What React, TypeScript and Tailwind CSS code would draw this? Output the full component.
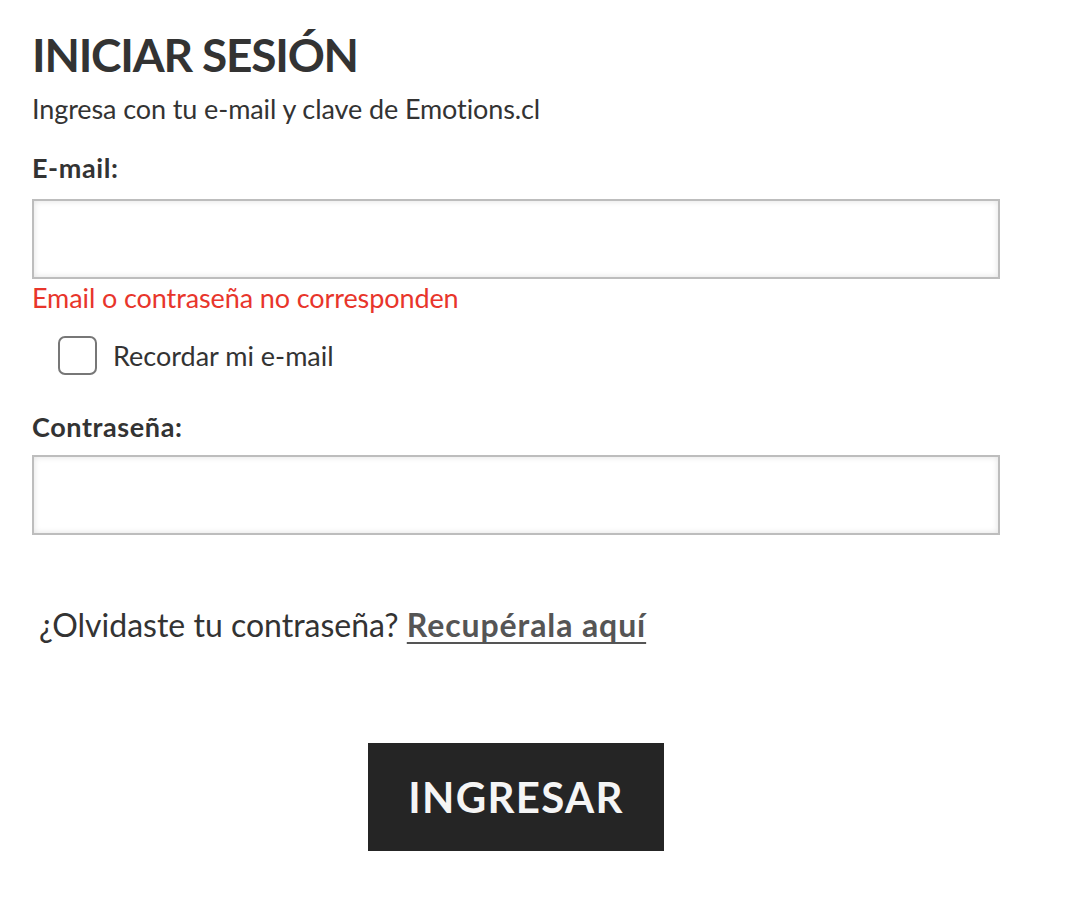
import { useState } from "react";

export default function App() {
  const [remember, setRemember] = useState(false);

  return (
    <div className="min-h-screen bg-white text-[#333] font-['Lato',sans-serif] [font-variant-ligatures:none]">
      <form className="w-[968px] ml-[32px] pt-[25px]" onSubmit={(e) => e.preventDefault()}>
        {/* Encabezado */}
        <h1 className="text-[46px] leading-[60px] font-bold tracking-[-1.2px] text-[#333]">
          INICIAR SESIÓN
        </h1>
        <p className="text-[27px] leading-[34px] tracking-[-0.1px] mt-[7px]">
          Ingresa con tu e-mail y clave de Emotions.cl
        </p>

        {/* E-mail */}
        <label className="block text-[27px] leading-[34px] font-bold tracking-[0.6px] mt-[25px]">E-mail:</label>
        <input
          type="email"
          className="block w-full h-[80px] mt-[14px] border-2 border-[#bdbdbd] bg-white shadow-[inset_0_0_6px_rgba(0,0,0,0.12)] outline-none px-3 text-[24px]"
        />
        <p className="text-[27px] leading-[34px] tracking-[-0.1px] text-[#e8352b] mt-[2px]">
          Email o contraseña no corresponden
        </p>

        <label className="flex items-center gap-[16px] ml-[26px] mt-[21px] cursor-pointer">
          <input
            type="checkbox"
            checked={remember}
            onChange={(e) => setRemember(e.target.checked)}
            className="appearance-none w-[39px] h-[39px] rounded-[7px] border-2 border-[#777] bg-white"
          />
          <span className="text-[27px] leading-[34px]">Recordar mi e-mail</span>
        </label>

        {/* Contraseña */}
        <label className="block text-[27px] leading-[34px] font-bold tracking-[0.6px] mt-[35px]">Contraseña:</label>
        <input
          type="password"
          className="block w-full h-[80px] mt-[11px] border-2 border-[#bdbdbd] bg-white shadow-[inset_0_0_6px_rgba(0,0,0,0.12)] outline-none px-3 text-[24px]"
        />

        <p className="text-[32px] leading-[40px] mt-[70px] pl-[7px]">
          ¿Olvidaste tu contraseña?{" "}
          <a href="#" className="font-bold tracking-[0.9px] text-[#555] underline underline-offset-[5px] decoration-2">
            Recupérala aquí
          </a>
        </p>

        <div className="flex justify-center mt-[98px]">
          <button
            type="submit"
            className="w-[296px] h-[108px] bg-[#252525] text-[#f5f5f5] text-[42px] font-bold tracking-[1.3px]"
          >
            INGRESAR
          </button>
        </div>
      </form>
    </div>
  );
}
